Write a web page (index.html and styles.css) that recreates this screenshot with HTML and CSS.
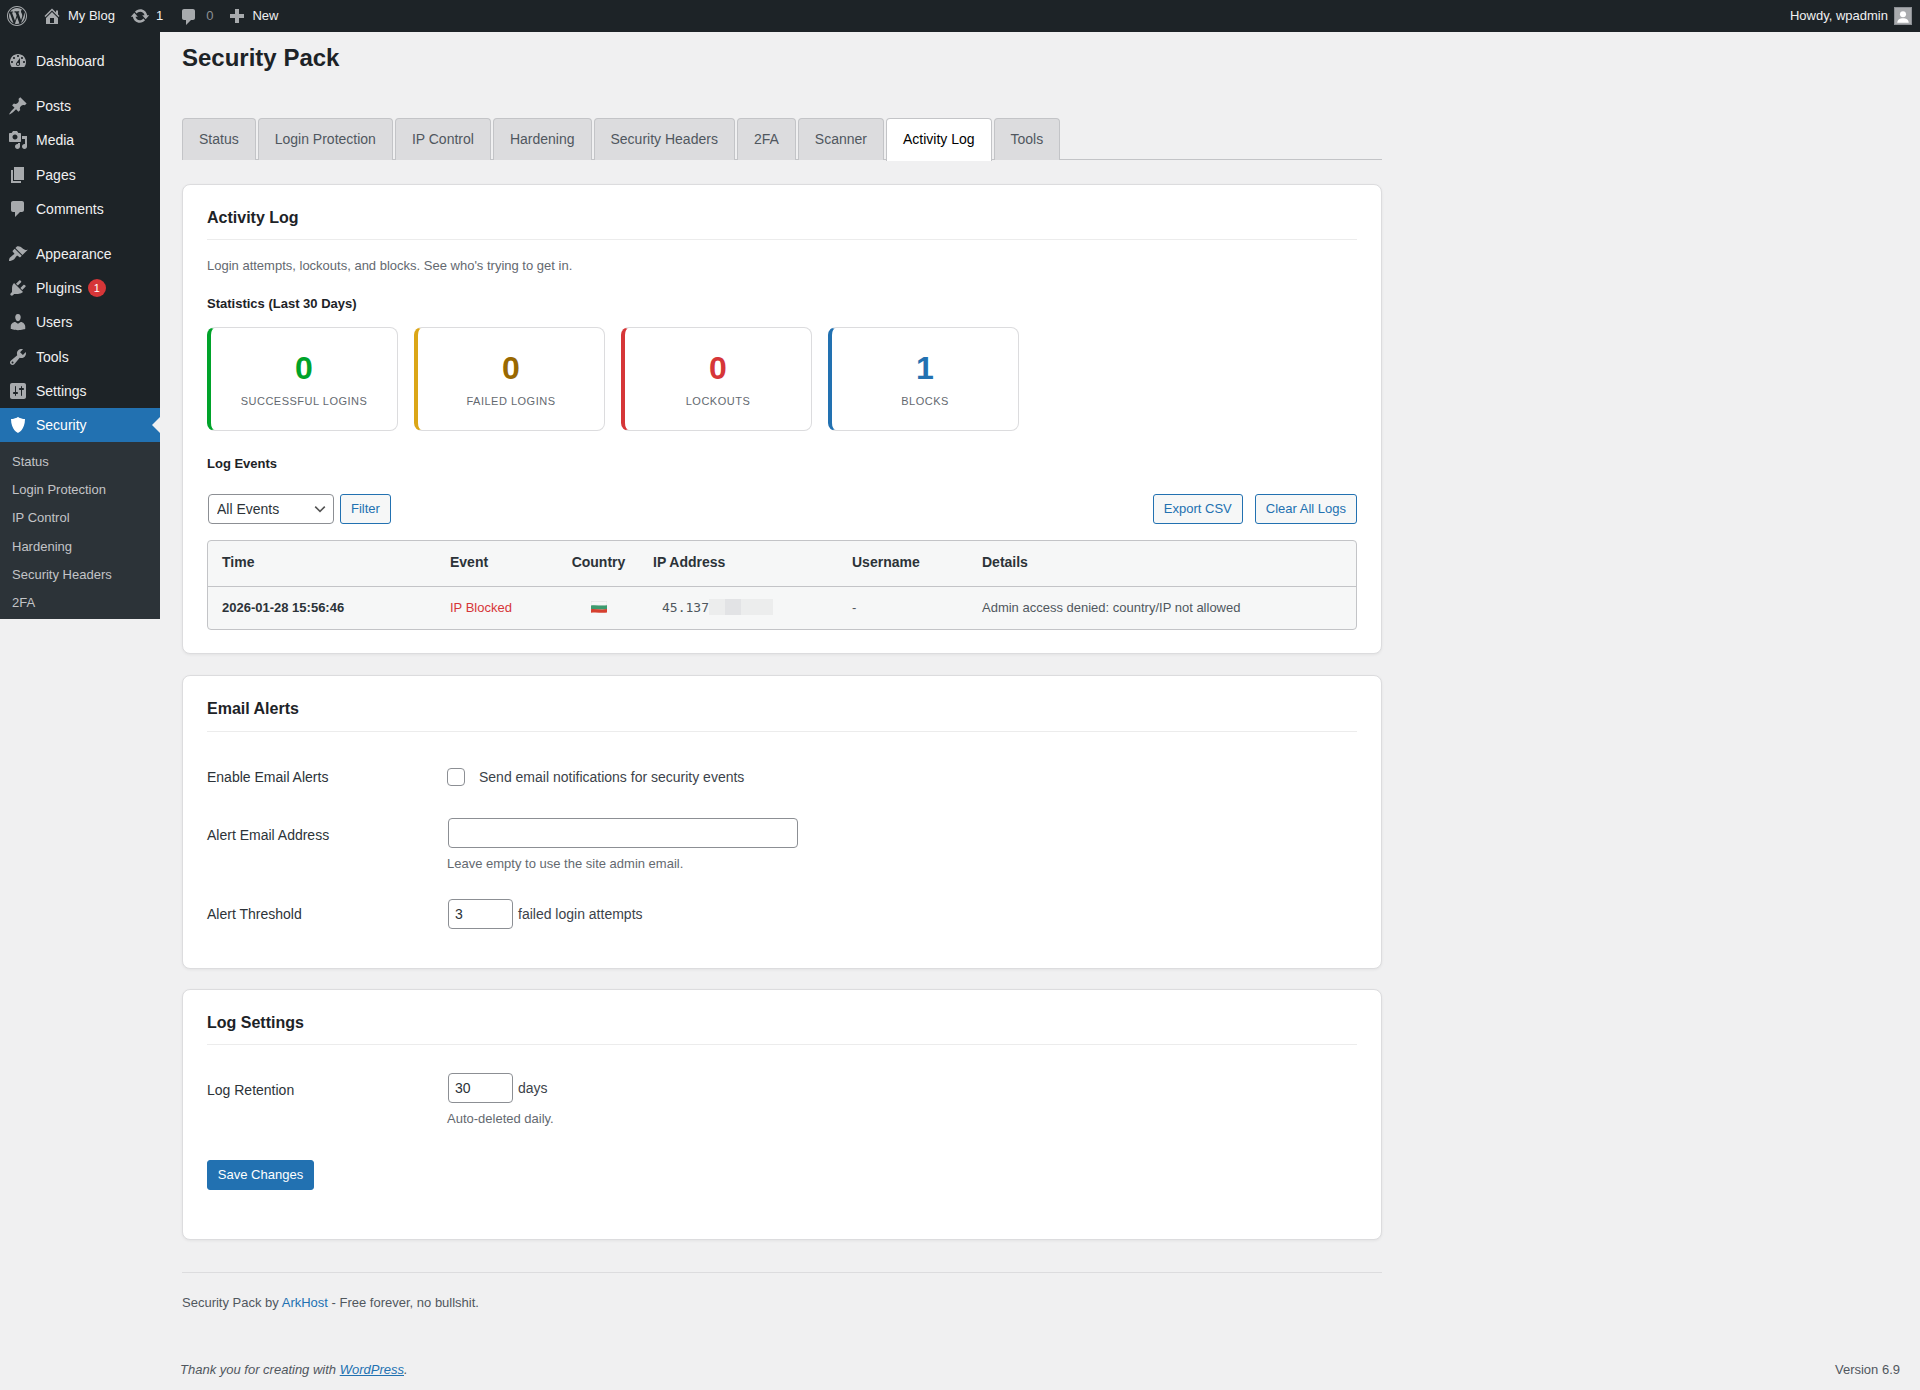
FILE: index.html
```html
<!DOCTYPE html>
<html lang="en">
<head>
<meta charset="utf-8">
<title>Security Pack</title>
<link rel="stylesheet" href="styles.css">
</head>
<body>
<header class="adminbar">
  <svg class="bar-icon logo" viewBox="0 0 20 20"><path d="M20 10c0-5.52-4.48-10-10-10S0 4.48 0 10s4.48 10 10 10 10-4.48 10-10zM10 1.01c4.97 0 8.99 4.02 8.99 8.99s-4.02 8.99-8.99 8.99S1.01 14.97 1.01 10 5.03 1.01 10 1.01zM8.01 14.82L4.96 6.61c.49-.03 1.05-.08 1.05-.08.43-.05.38-1.01-.06-.99 0 0-1.29.1-2.13.1-.15 0-.33 0-.52-.01 1.44-2.17 3.9-3.6 6.7-3.6 2.09 0 3.99.79 5.41 2.09-.6-.08-1.45.35-1.45 1.42 0 .66.38 1.22.79 1.88.31.54.5 1.22.5 2.21 0 1.34-1.27 4.48-1.27 4.48l-2.71-7.5c.48-.03.75-.16.75-.16.43-.05.38-1.1-.05-1.08 0 0-1.3.11-2.14.11-.78 0-2.11-.11-2.11-.11-.43-.02-.48 1.06-.05 1.08l.84.08 1.12 3.04zm6.02 2.15L16.64 10s.67-1.69.39-3.81c.63 1.14.94 2.42.94 3.81 0 2.96-1.56 5.58-3.94 6.97zM2.68 6.77L6.5 17.25c-2.67-1.3-4.47-4.08-4.47-7.25 0-1.16.2-2.23.65-3.23zm7.45 4.53l2.29 6.25c-.75.27-1.57.42-2.42.42-.72 0-1.41-.11-2.06-.3z"/></svg>
  <svg class="bar-icon home" viewBox="0 0 20 20"><path d="M16 8.5l1.53 1.53-1.06 1.06L10 4.62l-6.47 6.47-1.06-1.06L10 2.5l4 4v-2h2v4zm-6-2.46l6 5.99V18H4v-5.97zM12 17v-5H8v5h4z"/></svg>
  <span class="bar-text blog">My Blog</span>
  <svg class="bar-icon updates" viewBox="0 0 20 20"><path d="M10.2 3.28c3.53 0 6.43 2.61 6.92 6h2.08l-3.5 4-3.5-4h2.32c-.45-1.97-2.21-3.45-4.32-3.45-1.45 0-2.73.71-3.54 1.78L4.95 5.66C6.23 4.2 8.11 3.28 10.2 3.28zm-.4 13.44c-3.52 0-6.43-2.61-6.92-6H.8l3.5-4c1.17 1.33 2.33 2.67 3.5 4H5.48c.45 1.97 2.21 3.45 4.32 3.45 1.45 0 2.73-.71 3.54-1.78l1.71 1.95c-1.28 1.46-3.15 2.38-5.25 2.38z"/></svg>
  <span class="bar-text count">1</span>
  <svg class="bar-icon comments" viewBox="0 0 20 20"><path d="M5 2h9c1.1 0 2 .9 2 2v7c0 1.1-.9 2-2 2h-2l-5 5v-5H5c-1.1 0-2-.9-2-2V4c0-1.1.9-2 2-2z"/></svg>
  <span class="bar-text zero">0</span>
  <svg class="bar-icon plus" viewBox="0 0 20 20"><path d="M8 3h4v5h5v4h-5v5H8v-5H3V8h5z"/></svg>
  <span class="bar-text new">New</span>
  <span class="bar-text howdy">Howdy, wpadmin</span>
  <svg class="avatar" viewBox="0 0 18 18"><rect width="18" height="18" fill="#a9abae"/><circle cx="9" cy="7" r="3.4" fill="#fff"/><path d="M2.5 16.5c.5-4 3-5 6.500-5s6 1 6.500 5z" fill="#fff"/></svg>
</header>

<div class="layout">
  <nav class="sidebar">
    <ul class="menu">
      <li class="item"><svg class="menu-icon" viewBox="0 0 20 20"><path d="M3.76 16h12.48c1.1-1.37 1.76-3.11 1.76-5 0-4.42-3.58-8-8-8s-8 3.58-8 8c0 1.89.66 3.63 1.76 5zM10 4c.55 0 1 .45 1 1s-.45 1-1 1-1-.45-1-1 .45-1 1-1zM6 6c.55 0 1 .45 1 1s-.45 1-1 1-1-.45-1-1 .45-1 1-1zm8 0c.55 0 1 .45 1 1s-.45 1-1 1-1-.45-1-1 .45-1 1-1zm-5.37 5.55L12 7v6c0 1.1-.9 2-2 2s-2-.9-2-2c0-.57.24-1.08.63-1.45zM4 10c.55 0 1 .45 1 1s-.45 1-1 1-1-.45-1-1 .45-1 1-1zm12 0c.55 0 1 .45 1 1s-.45 1-1 1-1-.45-1-1 .45-1 1-1zm-5 3c0-.55-.45-1-1-1s-1 .45-1 1 .45 1 1 1 1-.45 1-1z"/></svg>Dashboard</li>
      <li class="item sep"><svg class="menu-icon" viewBox="0 0 20 20"><path d="M10.44 3.02l1.82-1.82 6.36 6.35-1.83 1.82c-1.05-.68-2.48-.57-3.41.36l-.75.75c-.92.93-1.04 2.35-.35 3.41l-1.83 1.82-2.41-2.41-2.8 2.79c-.42.42-3.38 2.71-3.8 2.29s1.86-3.39 2.28-3.81l2.79-2.79L4.1 9.36l1.83-1.82c1.05.69 2.48.57 3.4-.36l.75-.75c.93-.92 1.05-2.35.36-3.41z"/></svg>Posts</li>
      <li class="item"><svg class="menu-icon" viewBox="0 0 20 20"><path d="M13 11V4c0-.55-.45-1-1-1h-1.67L9 1H5L3.67 3H2c-.55 0-1 .45-1 1v7c0 .55.45 1 1 1h10c.55 0 1-.45 1-1zM7 4.500c1.38 0 2.500 1.120 2.500 2.500S8.380 9.500 7 9.500 4.500 8.380 4.500 7 5.620 4.500 7 4.500zM14 6h5v10.500c0 1.380-1.120 2.500-2.500 2.500S14 17.880 14 16.500s1.120-2.500 2.500-2.500c.17 0 .34.02.5.05V9h-3V6zm-4 8.050V13h2v3.500c0 1.380-1.120 2.500-2.500 2.500S7 17.880 7 16.500 8.120 14 9.500 14c.17 0 .34.02.5.05z"/></svg>Media</li>
      <li class="item"><svg class="menu-icon" viewBox="0 0 20 20"><path d="M6 15V2h10v13H6zm-1 1h8v2H3V5h2v11z"/></svg>Pages</li>
      <li class="item"><svg class="menu-icon" viewBox="0 0 20 20"><path d="M5 2h9c1.100 0 2 .9 2 2v7c0 1.100-.9 2-2 2h-2l-5 5v-5H5c-1.100 0-2-.9-2-2V4c0-1.100.9-2 2-2z"/></svg>Comments</li>
      <li class="item sep"><svg class="menu-icon" viewBox="0 0 20 20"><path d="M14.480 11.060L7.410 3.990l1.500-1.500c.5-.56 2.300-.47 3.510.32 1.210.8 1.430 1.280 2.910 2.100 1.180.64 2.450 1.260 4.450.85zm-.71.71L6.700 4.700 4.930 6.470c-.39.39-.39 1.020 0 1.410l1.060 1.060c.39.39.39 1.030 0 1.420-.6.6-1.430 1.110-2.210 1.690-.35.26-.7.53-1.010.84C1.430 13.230.91 15.950 1 17c1.050.09 3.770-.44 5.110-1.770.31-.31.58-.66.84-1.010.58-.78 1.090-1.610 1.690-2.210.39-.39 1.030-.39 1.420 0l1.060 1.060c.39.39 1.020.39 1.410 0z"/></svg>Appearance</li>
      <li class="item"><svg class="menu-icon" viewBox="0 0 20 20"><path d="M13.110 4.360L9.870 7.600 8 5.730l3.240-3.240c.35-.34 1.050-.2 1.560.32.52.51.66 1.210.31 1.550zm-8 1.770l.91-1.120 9.010 9.010-1.190.84c-.71.71-2.630 1.160-3.820 1.160H6.140L4.900 17.260c-.59.59-1.540.59-2.120 0-.59-.58-.59-1.530 0-2.120l1.240-1.240v-3.880c0-1.130.4-3.190 1.090-3.890zm7.260 3.970l3.240-3.240c.34-.35 1.040-.21 1.550.31.52.51.66 1.210.31 1.550l-3.240 3.250z"/></svg>Plugins<span class="badge">1</span></li>
      <li class="item"><svg class="menu-icon" viewBox="0 0 20 20"><path d="M10 9.250c-2.270 0-2.730-3.440-2.730-3.440C7 4.020 7.820 2 9.970 2c2.160 0 2.980 2.020 2.710 3.810 0 0-.41 3.440-2.680 3.440zm0 2.570L12.720 10c2.390 0 4.520 2.330 4.520 4.530v2.490s-3.650 1.130-7.240 1.130c-3.650 0-7.240-1.130-7.240-1.130v-2.490c0-2.250 1.940-4.480 4.470-4.480z"/></svg>Users</li>
      <li class="item"><svg class="menu-icon" viewBox="0 0 20 20"><path d="M16.680 9.770c-1.340 1.340-3.300 1.670-4.950.99l-5.410 6.520c-.99.99-2.590.99-3.580 0s-.99-2.590 0-3.570l6.520-5.420c-.68-1.650-.35-3.610.99-4.950 1.280-1.280 3.120-1.620 4.720-1.060l-2.890 2.890 2.820 2.820 2.860-2.870c.53 1.580.18 3.390-1.080 4.650zM3.810 16.210c.4.39 1.040.39 1.430 0 .4-.4.4-1.040 0-1.430-.39-.4-1.030-.4-1.430 0-.39.39-.39 1.030 0 1.430z"/></svg>Tools</li>
      <li class="item"><svg class="menu-icon" viewBox="0 0 20 20"><path d="M18 16V4c0-1.100-.9-2-2-2H4c-1.100 0-2 .9-2 2v12c0 1.100.9 2 2 2h12c1.100 0 2-.9 2-2zM8 11h1c.55 0 1 .45 1 1s-.45 1-1 1H8v1.500c0 .28-.22.5-.5.5s-.5-.22-.5-.5V13H6c-.55 0-1-.45-1-1s.45-1 1-1h1V5.500c0-.28.22-.5.5-.5s.5.22.5.5V11zm5-2h-1c-.55 0-1-.45-1-1s.45-1 1-1h1V5.500c0-.28.22-.5.5-.5s.5.22.5.5V7h1c.55 0 1 .45 1 1s-.45 1-1 1h-1v5.500c0 .28-.22.5-.5.5s-.5-.22-.5-.5V9z"/></svg>Settings</li>
      <li class="item current"><svg class="menu-icon" viewBox="0 0 20 20"><path d="M10 2s3 2 7 2c0 11-7 14-7 14S3 15 3 4c4 0 7-2 7-2z"/></svg>Security</li>
    </ul>
    <ul class="submenu">
      <li>Status</li>
      <li>Login Protection</li>
      <li>IP Control</li>
      <li>Hardening</li>
      <li>Security Headers</li>
      <li>2FA</li>
    </ul>
  </nav>

  <div class="content">
    <main class="wrap">
      <h1 class="page-title">Security Pack</h1>
      <div class="tabs">
        <a class="tab">Status</a>
        <a class="tab">Login Protection</a>
        <a class="tab">IP Control</a>
        <a class="tab">Hardening</a>
        <a class="tab">Security Headers</a>
        <a class="tab">2FA</a>
        <a class="tab">Scanner</a>
        <a class="tab active">Activity Log</a>
        <a class="tab">Tools</a>
      </div>

      <section class="card card-log">
        <h2 class="card-title">Activity Log</h2>
        <p class="desc">Login attempts, lockouts, and blocks. See who's trying to get in.</p>
        <h3 class="sub stats-heading">Statistics (Last 30 Days)</h3>
        <div class="stats">
          <div class="stat stat-green"><div class="num">0</div><div class="lbl">Successful Logins</div></div>
          <div class="stat stat-amber"><div class="num">0</div><div class="lbl">Failed Logins</div></div>
          <div class="stat stat-red"><div class="num">0</div><div class="lbl">Lockouts</div></div>
          <div class="stat stat-blue"><div class="num">1</div><div class="lbl">Blocks</div></div>
        </div>
        <h3 class="sub events-heading">Log Events</h3>
        <div class="toolbar">
          <select class="select"><option>All Events</option></select>
          <button class="btn">Filter</button>
          <button class="btn push">Export CSV</button>
          <button class="btn">Clear All Logs</button>
        </div>
        <div class="table-wrap">
          <table class="log-table">
            <colgroup><col class="c-time"><col class="c-event"><col class="c-country"><col class="c-ip"><col class="c-user"><col></colgroup>
            <thead><tr><th>Time</th><th>Event</th><th class="center">Country</th><th>IP Address</th><th>Username</th><th>Details</th></tr></thead>
            <tbody><tr>
              <td class="strong">2026-01-28 15:56:46</td>
              <td class="danger">IP Blocked</td>
              <td class="center"><svg class="flag" viewBox="0 0 16 12"><path d="M0 .6C5-.4 11 1 16 0v4.200C11 5 5 3.800 0 4.600z" fill="#f7f7f7" stroke="#d4d4d4" stroke-width=".5"/><path d="M0 4.400C5 3.800 11 5 16 4.200v4C11 9 5 7.800 0 8.400z" fill="#3d9b6e"/><path d="M0 8.200C5 7.800 11 9 16 8v3.500c-5 .8-11-.6-16 .3z" fill="#d6402f"/></svg></td>
              <td><code class="ip">45.137</code><span class="blur"><i class="b1"></i><i class="b2"></i><i class="b3"></i></span></td>
              <td>-</td>
              <td>Admin access denied: country/IP not allowed</td>
            </tr></tbody>
          </table>
        </div>
      </section>

      <section class="card card-email">
        <h2 class="card-title">Email Alerts</h2>
        <div class="row row-check">
          <label class="row-label">Enable Email Alerts</label>
          <div class="check-line"><input class="check" type="checkbox"><span class="check-text">Send email notifications for security events</span></div>
        </div>
        <div class="row row-address">
          <label class="row-label">Alert Email Address</label>
          <div><input class="field field-wide" type="text"><p class="help">Leave empty to use the site admin email.</p></div>
        </div>
        <div class="row row-threshold">
          <label class="row-label">Alert Threshold</label>
          <div class="inline"><input class="field field-small" type="text" value="3"><span>failed login attempts</span></div>
        </div>
      </section>

      <section class="card card-settings">
        <h2 class="card-title">Log Settings</h2>
        <div class="row row-retention">
          <label class="row-label">Log Retention</label>
          <div><div class="inline inline-days"><input class="field field-small" type="text" value="30"><span>days</span></div><p class="help">Auto-deleted daily.</p></div>
        </div>
        <button class="btn-primary">Save Changes</button>
      </section>

      <p class="plugin-foot">Security Pack by <a class="link">ArkHost</a> - Free forever, no bullshit.</p>
    </main>
    <footer class="wp-foot">
      <em>Thank you for creating with <a class="link underline">WordPress</a>.</em>
      <span>Version 6.9</span>
    </footer>
  </div>
</div>
</body>
</html>
```
FILE: styles.css
```css
* { box-sizing: border-box; }
html, body { margin: 0; padding: 0; }
body {
  background: #f0f0f1;
  color: #3c434a;
  font-family: "Liberation Sans", Arial, sans-serif;
  font-size: 13px;
  line-height: 18px;
  height: 1390px;
  overflow: hidden;
}
ul { list-style: none; margin: 0; padding: 0; }
h1, h2, h3, p { margin: 0; }

/* admin bar */
.adminbar {
  height: 32px;
  background: #1d2327;
  color: #f0f0f1;
  display: flex;
  align-items: center;
}
.bar-icon { width: 20px; height: 20px; fill: #a7aaad; flex: none; }
.logo { margin-left: 7px; }
.home { margin-left: 15px; }
.blog { margin-left: 6px; }
.updates { margin-left: 15px; }
.count { margin-left: 6px; }
.comments { margin-left: 16px; margin-top: 2px; }
.zero { margin-left: 7px; color: #8c8f94; }
.plus { margin-left: 14px; }
.new { margin-left: 5px; }
.howdy { margin-left: auto; }
.avatar { width: 18px; height: 18px; margin: 0 8px 0 6px; border: 1px solid #8c8f94; flex: none; }

.layout { display: flex; align-items: flex-start; }

/* sidebar */
.sidebar { width: 160px; flex: none; background: #1d2327; padding-top: 12px; }
.item {
  height: 34.2px;
  display: flex;
  align-items: center;
  padding-left: 8px;
  font-size: 14px;
  color: #f0f0f1;
}
.item.sep { margin-top: 11px; }
.menu-icon { width: 20px; height: 20px; fill: #a7aaad; margin-right: 8px; flex: none; }
.badge {
  width: 18px; height: 18px;
  margin-left: 6px;
  border-radius: 50%;
  background: #d63638;
  color: #fff;
  font-size: 11px;
  line-height: 18px;
  text-align: center;
}
.current { background: #2271b1; color: #fff; }
.current .menu-icon { fill: #fff; }
.current::after {
  content: "";
  margin-left: auto;
  border: 8px solid transparent;
  border-right-color: #f0f0f1;
  border-left-width: 0;
}
.submenu { background: #2c3338; padding: 6px 0 1.8px; color: #c3c4c7; }
.submenu li { padding: 5px 12px; line-height: 18.2px; height: 28.2px; }

/* content */
.content { flex: 1; min-width: 0; }
.wrap { width: 1222px; padding-left: 22px; }
.page-title { font-size: 24px; font-weight: 700; line-height: 30px; color: #1d2327; padding-top: 11px; margin-bottom: 45px; }

.tabs { display: flex; gap: 2px; height: 42px; border-bottom: 1px solid #c3c4c7; margin-bottom: 24px; }
.tab {
  height: 42px;
  padding: 0 16px;
  border: 1px solid #c3c4c7;
  border-bottom: 0;
  border-radius: 4px 4px 0 0;
  background: #dcdcde;
  color: #50575e;
  font-size: 14px;
  line-height: 41px;
}
.tab.active { background: #fff; color: #000; height: 43px; }

.card {
  background: #fff;
  border: 1px solid #dcdcde;
  border-radius: 8px;
  box-shadow: 0 1px 3px rgba(0, 0, 0, .06);
  padding: 22px 24px 0;
  margin-bottom: 20px;
}
.card-log { height: 470px; margin-bottom: 21px; }
.card-email { height: 294px; }
.card-settings { height: 251px; }
.card-title {
  font-size: 16px;
  font-weight: 700;
  line-height: 22px;
  color: #1d2327;
  padding-bottom: 10px;
  border-bottom: 1px solid #ececec;
}
.card-email .card-title { padding-bottom: 11px; }
.desc { margin-top: 17px; color: #646970; }
.sub { font-size: 13px; font-weight: 700; line-height: 18px; color: #1d2327; }
.stats-heading { margin-top: 20px; }
.events-heading { margin-top: 24px; }

.stats { display: flex; gap: 16px; margin-top: 14px; }
.stat {
  width: 191px;
  height: 104px;
  border: 1px solid #dcdcde;
  border-left: 4px solid;
  border-radius: 8px;
  text-align: center;
  padding-top: 21px;
}
.num { font-size: 32px; font-weight: 700; line-height: 38px; }
.lbl { margin-top: 6px; font-size: 11px; letter-spacing: .5px; line-height: 16px; text-transform: uppercase; color: #646970; }
.stat-green { border-left-color: #00a32a; }
.stat-green .num { color: #00a32a; }
.stat-amber { border-left-color: #dba617; }
.stat-amber .num { color: #996800; }
.stat-red { border-left-color: #d63638; }
.stat-red .num { color: #d63638; }
.stat-blue { border-left-color: #2271b1; }
.stat-blue .num { color: #2271b1; }

.toolbar { display: flex; align-items: center; margin-top: 21px; padding-left: 1px; gap: 6px; }
.select {
  appearance: none;
  width: 126px;
  height: 30px;
  padding: 0 24px 0 8px;
  border: 1px solid #8c8f94;
  border-radius: 4px;
  color: #2c3338;
  font: 14px "Liberation Sans", Arial, sans-serif;
  background: #fff url("data:image/svg+xml,%3Csvg xmlns='http://www.w3.org/2000/svg' width='20' height='20'%3E%3Cpath d='M4 7l6 6 6-6' fill='none' stroke='%23555' stroke-width='2'/%3E%3C/svg%3E") no-repeat right 5px center / 16px 16px;
}
.btn {
  height: 30px;
  padding: 0 10px 1px;
  border: 1px solid #2271b1;
  border-radius: 3px;
  background: #f6f7f7;
  color: #2271b1;
  font: 13px "Liberation Sans", Arial, sans-serif;
}
.btn.push { margin-left: auto; margin-right: 6px; }

.table-wrap { margin-top: 16px; border: 1px solid #c3c4c7; border-radius: 4px; background: #f6f7f7; height: 90px; }
.log-table { width: 100%; border-collapse: collapse; table-layout: fixed; }
.c-time { width: 228px; }
.c-event { width: 122px; }
.c-country { width: 81px; }
.c-ip { width: 199px; }
.c-user { width: 130px; }
.log-table th {
  height: 45px;
  padding: 0 14px 2px;
  border-bottom: 1px solid #c3c4c7;
  font-size: 14px;
  font-weight: 700;
  text-align: left;
  color: #2c3338;
}
.log-table td { height: 43px; padding: 0 14px; color: #50575e; white-space: nowrap; }
.log-table th.center, .log-table td.center { text-align: center; padding-left: 0; padding-right: 0; }
.log-table .strong { font-weight: 700; color: #2c3338; }
.log-table .danger { color: #d63638; }
.flag { width: 16px; height: 12px; vertical-align: -1px; }
.ip { font: 13px "DejaVu Sans Mono", monospace; padding-left: 9px; color: #50575e; }
.blur { display: inline-flex; vertical-align: -3px; height: 16px; }
.blur i { display: block; height: 16px; }
.b1 { width: 16px; background: #eceded; }
.b2 { width: 16px; background: #e2e3e5; }
.b3 { width: 32px; background: #eceded; }

/* form rows */
.row { display: flex; align-items: flex-start; font-size: 14px; line-height: 20px; }
.row-label { width: 240px; flex: none; color: #2c3338; }
.row-check { margin-top: 36px; }
.row-check .row-label { margin-top: -1px; }
.check-line { display: flex; align-items: center; height: 18px; }
.check {
  appearance: none;
  width: 18px;
  height: 18px;
  margin: 0 14px 0 0;
  border: 1px solid #8c8f94;
  border-radius: 4px;
  background: #fff;
}
.check-text { color: #3c434a; }
.row-address { margin-top: 31px; }
.row-address .row-label { margin-top: 7px; }
.row-threshold { margin-top: 26px; }
.row-threshold .row-label { margin-top: 5px; }
.row-retention { margin-top: 28px; }
.row-retention .row-label { margin-top: 7px; }
.field {
  height: 30px;
  border: 1px solid #8c8f94;
  border-radius: 4px;
  background: #fff;
  color: #2c3338;
  padding: 0 6px;
  font: 14px "Liberation Sans", Arial, sans-serif;
  display: block;
}
.field-wide { width: 350px; margin-left: 1px; }
.field-small { width: 65px; margin-left: 1px; }
.help { margin-top: 7px; font-size: 13px; line-height: 18px; color: #646970; }
.inline { display: flex; align-items: center; gap: 5px; color: #3c434a; }
.inline-days span { margin-top: -1px; }
.btn-primary {
  display: block;
  margin-top: 32px;
  width: 107px;
  height: 30px;
  padding-bottom: 2px;
  border: 1px solid #2271b1;
  border-radius: 3px;
  background: #2271b1;
  color: #fff;
  font: 13px "Liberation Sans", Arial, sans-serif;
}

.plugin-foot { margin-top: 32px; padding-top: 21px; border-top: 1px solid #dcdcde; color: #50575e; }
.link { color: #2271b1; }
.underline { text-decoration: underline; }
.wp-foot {
  display: flex;
  justify-content: space-between;
  padding: 0 20px;
  margin-top: 49px;
  color: #50575e;
}
```
